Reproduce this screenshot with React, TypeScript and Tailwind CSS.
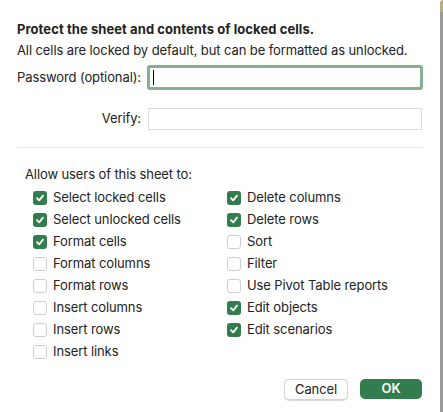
import React from "react";

type Option = { label: string; checked: boolean };

const leftOptions: Option[] = [
  { label: "Select locked cells", checked: true },
  { label: "Select unlocked cells", checked: true },
  { label: "Format cells", checked: true },
  { label: "Format columns", checked: false },
  { label: "Format rows", checked: false },
  { label: "Insert columns", checked: false },
  { label: "Insert rows", checked: false },
  { label: "Insert links", checked: false },
];

const rightOptions: Option[] = [
  { label: "Delete columns", checked: true },
  { label: "Delete rows", checked: true },
  { label: "Sort", checked: false },
  { label: "Filter", checked: false },
  { label: "Use Pivot Table reports", checked: false },
  { label: "Edit objects", checked: true },
  { label: "Edit scenarios", checked: true },
];

const CheckRow: React.FC<Option> = ({ label, checked }) => (
  <div className="flex h-[22px] items-center gap-[6px]">
    {checked ? (
      <span className="grid h-[14px] w-[14px] place-items-center rounded-[3px] bg-[#337c4d]">
        <svg width="10" height="10" viewBox="0 0 10 10" fill="none">
          <path
            d="M2 5.2 L4.2 7.4 L8 2.6"
            stroke="white"
            strokeWidth="1.8"
            strokeLinecap="round"
            strokeLinejoin="round"
          />
        </svg>
      </span>
    ) : (
      <span className="h-[14px] w-[14px] rounded-[3px] border border-[#cfcfcf] bg-white" />
    )}
    <span>{label}</span>
  </div>
);

export default function App() {
  return (
    <div
      className="relative h-[412px] w-[443px] overflow-hidden bg-white text-[13px] tracking-[-0.1px] text-[#222]"
      style={{ fontFamily: "Inter, 'Liberation Sans', sans-serif" }}
    >
      <div className="absolute right-0 top-[12px] h-[400px] w-[3px] bg-[#9a9a9a]" />
      <div className="absolute right-0 top-0 h-[12px] w-[3px] rounded-tl-full bg-[#b8ad80]" />

      <div className="pl-[17px] pr-[20px] pt-[21px]">
        <div className="h-[16px] font-bold leading-[16px] tracking-[0.08px]">
          Protect the sheet and contents of locked cells.
        </div>
        <div className="mt-[5px] leading-[16px]">All cells are locked by default, but can be formatted as unlocked.</div>

        <div className="mt-[7px] flex h-[25px] items-center">
          <span className="w-[130px]">Password (optional):</span>
          <div className="flex h-[25px] w-[277px] items-center rounded-[3px] border-[3px] border-[#84b28f] bg-white pl-[3px]">
            <span className="h-[15px] w-px bg-black" />
          </div>
        </div>

        <div className="mt-[18px] flex h-[22px] items-center">
          <span className="w-[124px] text-right">Verify:</span>
          <div className="ml-[7px] h-[22px] w-[274px] border border-[#dedede] bg-white" />
        </div>

        <div className="mt-[17px] h-px w-[406px] bg-[#e4e4e4]" />

        <div className="mt-[18px] pl-[8px] leading-[16px]">Allow users of this sheet to:</div>

        <div className="mt-[5px] flex pl-[16px]">
          <div className="w-[194px]">
            {leftOptions.map((o) => (
              <CheckRow key={o.label} {...o} />
            ))}
          </div>
          <div>
            {rightOptions.map((o) => (
              <CheckRow key={o.label} {...o} />
            ))}
          </div>
        </div>

        <div className="mt-[16px] flex justify-end gap-[12px] pr-[1px]">
          <button className="h-[21px] w-[64px] rounded-[5px] border border-[#d4d4d4] bg-white text-[13px] text-[#222] shadow-[0_0.5px_1px_rgba(0,0,0,0.15)]">
            Cancel
          </button>
          <button className="h-[20px] w-[62px] rounded-[5px] bg-[#337c4d] text-[13px] font-semibold text-white">
            OK
          </button>
        </div>
      </div>
    </div>
  );
}
